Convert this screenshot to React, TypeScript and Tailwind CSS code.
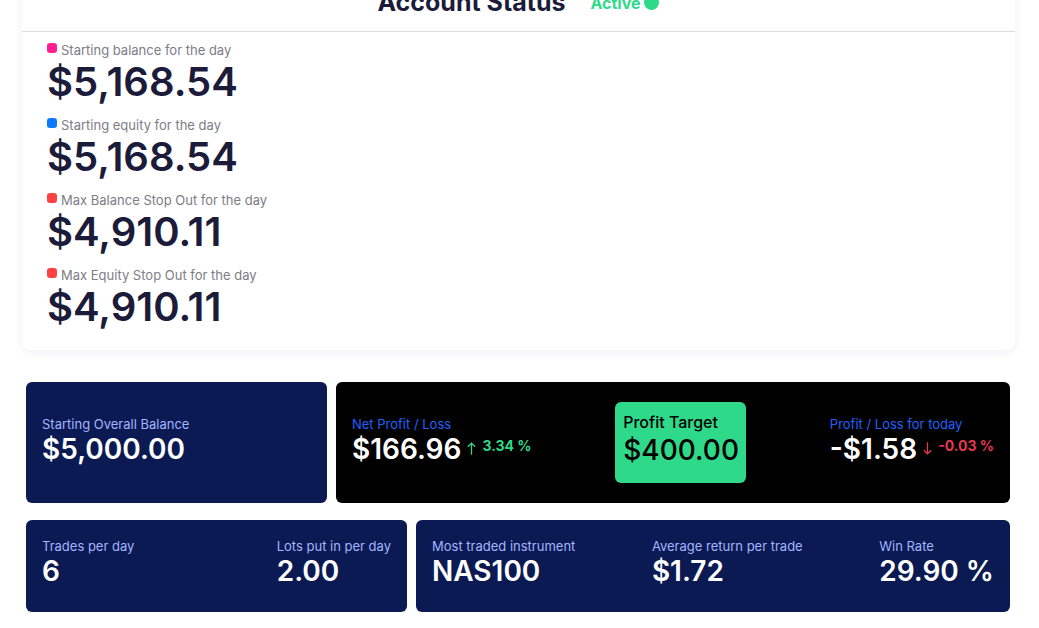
import React from "react";

interface DayStat {
  label: string;
  value: string;
  dot: string;
}

const DAY_STATS: DayStat[] = [
  { label: "Starting balance for the day", value: "$5,168.54", dot: "bg-[#ff1f8f]" },
  { label: "Starting equity for the day", value: "$5,168.54", dot: "bg-[#0a7bff]" },
  { label: "Max Balance Stop Out for the day", value: "$4,910.11", dot: "bg-[#ff4141]" },
  { label: "Max Equity Stop Out for the day", value: "$4,910.11", dot: "bg-[#ff4141]" },
];

const ArrowUp = () => (
  <svg viewBox="0 0 10 16" className="w-[9px] h-[15px] text-[#2fd98a]" fill="none" stroke="currentColor" strokeWidth="1.4">
    <path d="M5 15V2M1 6l4-4 4 4" />
  </svg>
);

const ArrowDown = () => (
  <svg viewBox="0 0 10 16" className="w-[9px] h-[15px] text-[#e5384f]" fill="none" stroke="currentColor" strokeWidth="1.4">
    <path d="M5 1v13M1 10l4 4 4-4" />
  </svg>
);

const MiniStat = ({ label, value }: { label: string; value: string }) => (
  <div>
    <div className="text-[13px] leading-[16px] text-[#a3b5ff]">{label}</div>
    <div className="text-[28px] leading-[34px] font-semibold text-white">{value}</div>
  </div>
);

export default function App() {
  return (
    <div className="min-h-screen bg-white font-['Inter',sans-serif] overflow-hidden">
      {/* account status card, page is scrolled a bit */}
      <div className="ml-[22px] w-[993px] -mt-[20px] bg-white rounded-lg shadow-[0_2px_10px_rgba(40,40,120,0.07)]">
        <div className="h-[52px] pb-[6px] flex items-center justify-center border-b border-[#dcdcdc] gap-[25px]">
          <span className="text-[25px] font-bold text-[#1c1c3a]">Account Status</span>
          <span className="flex items-center gap-[4px] text-[16px] font-bold text-[#2fd98a]">
            Active
            <span className="w-[15px] h-[15px] rounded-full bg-[#2fd98a]" />
          </span>
        </div>
        <div className="pl-[25px] pt-[10px] pb-[8px] flex flex-col">
          {DAY_STATS.map((s, i) => (
            <div key={i} className="h-[75px]">
              <div className="flex items-center gap-[4px] h-[12px]">
                <span className={`w-[10px] h-[10px] rounded-[3px] ${s.dot}`} />
                <span className="text-[13px] text-[#7d7d86] leading-[12px] mt-[3px]">{s.label}</span>
              </div>
              <div className="text-[40px] leading-[56px] font-semibold text-[#1c1c3a]">{s.value}</div>
            </div>
          ))}
        </div>
      </div>

      <div className="ml-[26px] w-[984px] mt-[32px] flex flex-col gap-[17px]">
        <div className="flex gap-[9px] h-[121px]">
          <div className="w-[301px] bg-[#0b1a52] rounded-md px-[16px] flex items-center pb-[4px]">
            <MiniStat label="Starting Overall Balance" value="$5,000.00" />
          </div>
          <div className="flex-1 bg-black rounded-md px-[16px] flex items-center justify-between">
            <div className="pb-[4px]">
              <div className="text-[13px] leading-[16px] text-[#2160ff]">Net Profit / Loss</div>
              <div className="flex items-center gap-[6px]">
                <span className="text-[28px] leading-[34px] font-semibold text-white">$166.96</span>
                <ArrowUp />
                <span className="text-[14px] font-bold text-[#2fd98a] -mt-[6px]">3.34 %</span>
              </div>
            </div>
            <div className="w-[131px] h-[81px] bg-[#2fd98a] rounded-md px-[8px] pt-[10px]">
              <div className="text-[16px] leading-[20px] font-medium text-black">Profit Target</div>
              <div className="text-[28px] leading-[36px] font-medium text-black">$400.00</div>
            </div>
            <div className="pb-[4px]">
              <div className="text-[13px] leading-[16px] text-[#2160ff]">Profit / Loss for today</div>
              <div className="flex items-center gap-[6px]">
                <span className="text-[28px] leading-[34px] font-semibold text-white">-$1.58</span>
                <ArrowDown />
                <span className="text-[14px] font-bold text-[#e5384f] -mt-[6px]">-0.03 %</span>
              </div>
            </div>
          </div>
        </div>

        <div className="flex gap-[9px] h-[92px]">
          <div className="w-[381px] bg-[#0b1a52] rounded-md px-[16px] flex items-center justify-between pb-[6px]">
            <MiniStat label="Trades per day" value="6" />
            <MiniStat label="Lots put in per day" value="2.00" />
          </div>
          <div className="flex-1 bg-[#0b1a52] rounded-md px-[16px] flex items-center justify-between pb-[6px]">
            <MiniStat label="Most traded instrument" value="NAS100" />
            <MiniStat label="Average return per trade" value="$1.72" />
            <MiniStat label="Win Rate" value="29.90 %" />
          </div>
        </div>
      </div>
    </div>
  );
}
